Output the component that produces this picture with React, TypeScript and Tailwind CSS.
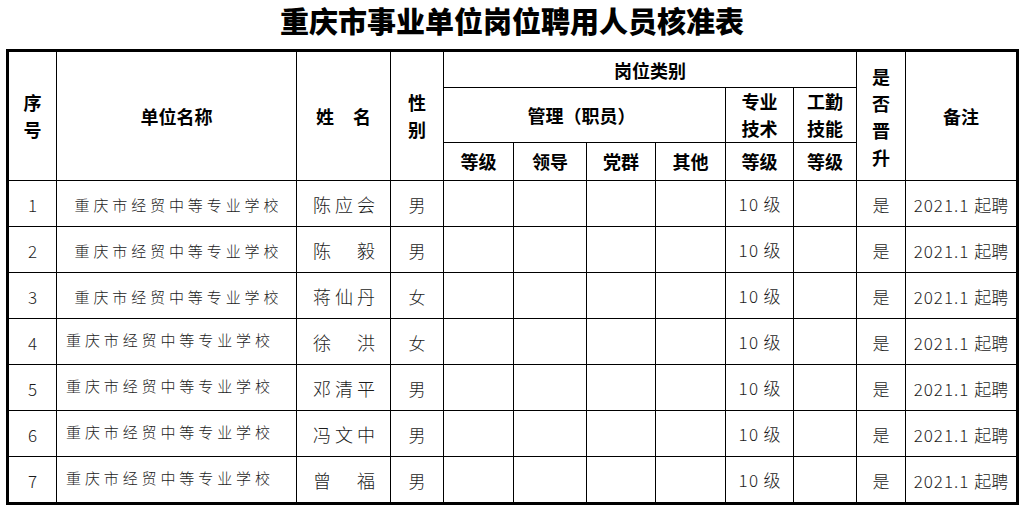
import React from "react";

const F = { fontFamily: '"Noto Sans CJK SC", "Noto Sans", sans-serif' };

type Row = { n: string; name: string[]; sex: string; left: boolean };

const rows: Row[] = [
  { n: "1", name: ["陈", "应", "会"], sex: "男", left: false },
  { n: "2", name: ["陈", "毅"], sex: "男", left: false },
  { n: "3", name: ["蒋", "仙", "丹"], sex: "女", left: false },
  { n: "4", name: ["徐", "洪"], sex: "女", left: true },
  { n: "5", name: ["邓", "清", "平"], sex: "男", left: true },
  { n: "6", name: ["冯", "文", "中"], sex: "男", left: true },
  { n: "7", name: ["曾", "福"], sex: "男", left: true },
];

const school = ["重", "庆", "市", "经", "贸", "中", "等", "专", "业", "学", "校"];

function H({ children, className = "" }: { children: React.ReactNode; className?: string }) {
  return (
    <div className={`bg-white flex items-center justify-center text-[18px] font-bold text-black leading-[27px] text-center ${className}`}>
      {children}
    </div>
  );
}

function D({ children, className = "" }: { children?: React.ReactNode; className?: string }) {
  return (
    <div className={`bg-white flex items-center text-[17px] font-light text-[#1c1c1c] leading-none whitespace-nowrap ${className}`}>
      {children}
    </div>
  );
}

export default function App() {
  return (
    <div className="w-[1024px] h-[513px] bg-white overflow-hidden" style={F}>
      <div className="h-[49px] flex items-center justify-center pb-[8px]">
        <h1 className="text-[29px] font-black text-black leading-none tracking-[0px]">
          重庆市事业单位岗位聘用人员核准表
        </h1>
      </div>
      <div className="ml-[6px] w-[1013px] border-[3px] border-black bg-black grid gap-px grid-cols-[47px_239px_93px_52px_69px_72px_68px_69px_67px_62px_48px_110px] grid-rows-[35px_54px_37px_repeat(7,45px)]">
        <H className="row-span-3 flex-col">
          <span>序</span>
          <span>号</span>
        </H>
        <H className="row-span-3">单位名称</H>
        <H className="row-span-3 gap-[19px]">
          <span>姓</span>
          <span>名</span>
        </H>
        <H className="row-span-3 flex-col">
          <span>性</span>
          <span>别</span>
        </H>
        <H className="col-span-6 pt-[2px]">岗位类别</H>
        <H className="row-span-3 flex-col pt-[1px]">
          <span>是</span>
          <span>否</span>
          <span>晋</span>
          <span>升</span>
        </H>
        <H className="row-span-3">备注</H>

        <H className="col-span-4 pr-[6px]">管理（职员）</H>
        <H className="flex-col">
          <span>专业</span>
          <span>技术</span>
        </H>
        <H className="flex-col">
          <span>工勤</span>
          <span>技能</span>
        </H>

        <H>等级</H>
        <H>领导</H>
        <H>党群</H>
        <H>其他</H>
        <H>等级</H>
        <H>等级</H>

        {rows.map((r) => (
          <React.Fragment key={r.n}>
            <D className="justify-center pt-[2px]">{r.n}</D>
            <D
              className={
                r.left
                  ? "justify-start pl-[9px] pb-[5px]"
                  : "justify-center pt-[2px]"
              }
            >
              <div className="w-[204px] flex justify-between text-[15px]">
                {school.map((c, i) => (
                  <span key={i}>{c}</span>
                ))}
              </div>
            </D>
            <D className="justify-center pt-[1px] pl-[1px]">
              <div className="w-[62px] flex justify-between text-[18px]">
                {r.name.map((c, i) => (
                  <span key={i}>{c}</span>
                ))}
              </div>
            </D>
            <D className="justify-center pt-[2px]">{r.sex}</D>
            <D />
            <D />
            <D />
            <D />
            <D className="justify-center">
              <span className="tracking-[1.5px]">10</span>
              <span className="ml-[4px]">级</span>
            </D>
            <D />
            <D className="justify-center pt-[1px]">是</D>
            <D className="justify-center pt-[1px]">
              <span className="tracking-[1px]">2021.1</span>
              <span className="ml-[5px]">起聘</span>
            </D>
          </React.Fragment>
        ))}
      </div>
    </div>
  );
}
